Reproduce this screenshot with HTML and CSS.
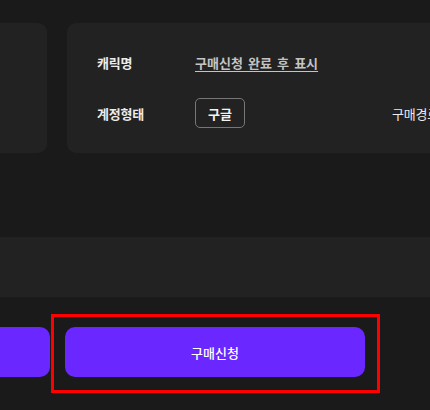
FILE: index.html
```html
<!DOCTYPE html>
<html lang="ko">
<head>
    <meta charset="UTF-8">
    <meta name="viewport" content="width=device-width, initial-scale=1.0">
    <title>구매신청</title>
    <link rel="stylesheet" href="styles.css">
</head>
<body>
    <div class="page">
        <div class="cards">
            <div class="card card-left"></div>
            <div class="card card-right">
                <div class="info-grid">
                    <div class="info-row">
                        <span class="label">캐릭명</span>
                        <a class="value-link" href="#">구매신청 완료 후 표시</a>
                    </div>
                    <div class="info-row"></div>
                    <div class="info-row">
                        <span class="label">계정형태</span>
                        <span class="pill">구글</span>
                    </div>
                    <div class="info-row">
                        <span class="label label-light">구매경로</span>
                    </div>
                </div>
            </div>
        </div>

        <div class="strip"></div>

        <div class="actions">
            <button class="btn btn-left" aria-label="이전"></button>
            <button class="btn btn-main">구매신청</button>
        </div>

        <div class="highlight"></div>
    </div>
</body>
</html>
```

FILE: styles.css
```css
html, body {
    margin: 0;
    padding: 0;
}
body {
    background: #1a1a1a;
    font-family: "Noto Sans CJK KR", "Noto Sans", sans-serif;
    color: #e8e8e8;
    width: 430px;
    height: 410px;
    overflow: hidden;
}
.page {
    position: relative;
    height: 410px;
}
.cards {
    display: flex;
    gap: 20px;
    padding-top: 23px;
    margin-left: -253px;
}
.card {
    flex: none;
    height: 130px;
    background: #222222;
    border-radius: 9px;
}
.card-left {
    width: 300px;
}
.card-right {
    width: 600px;
    box-sizing: border-box;
    padding: 24px 0 0 30px;
}
.info-grid {
    display: grid;
    grid-template-columns: 295px 295px;
    row-gap: 21px;
}
.info-row {
    display: flex;
    align-items: center;
    height: 30px;
}
.label {
    width: 98px;
    font-size: 13px;
    font-weight: bold;
    color: #ececec;
    letter-spacing: -0.2px;
}
.label-light {
    font-weight: normal;
}
.value-link {
    font-size: 13px;
    font-weight: bold;
    color: #c4c4c4;
    text-decoration: underline;
    text-underline-offset: 3px;
    word-spacing: 1.5px;
}
.pill {
    box-sizing: border-box;
    width: 50px;
    height: 30px;
    display: flex;
    align-items: center;
    justify-content: center;
    border: 1px solid #777;
    border-radius: 5px;
    font-size: 13px;
    font-weight: bold;
    color: #f2f2f2;
}
.strip {
    margin-top: 84px;
    height: 60px;
    background: #222222;
}
.actions {
    display: flex;
    gap: 15px;
    margin-top: 30px;
    margin-left: -150px;
}
.btn {
    flex: none;
    height: 50px;
    border: none;
    border-radius: 10px;
    background: #6a27ff;
    color: #fff;
    font-family: inherit;
    font-size: 13px;
    font-weight: 500;
    line-height: 1;
    cursor: pointer;
}
.btn-left {
    width: 200px;
}
.btn-main {
    width: 300px;
}
/* annotation box over the main button */
.highlight {
    position: absolute;
    left: 51px;
    top: 314px;
    width: 323px;
    height: 73px;
    border: 3px solid #ff0000;
    pointer-events: none;
}
```
